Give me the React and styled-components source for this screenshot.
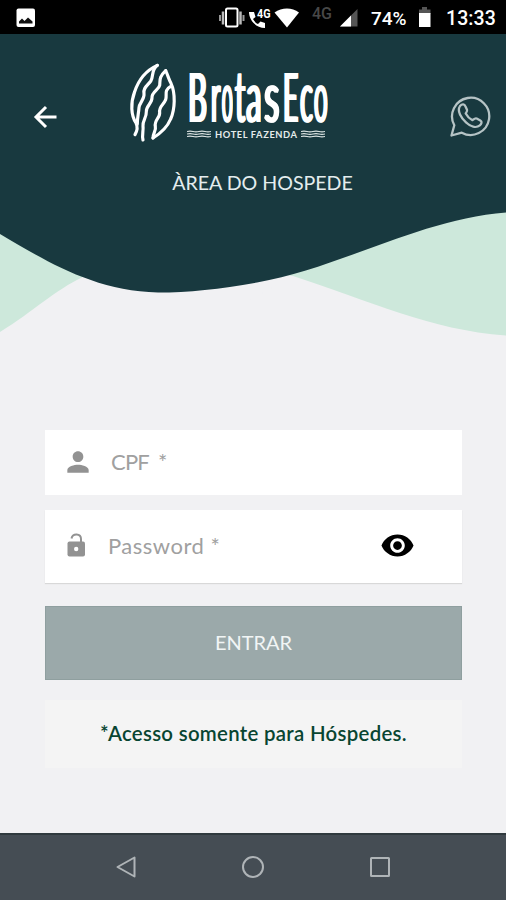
import * as React from 'react';
import styled, { createGlobalStyle } from "styled-components";
import { MdPerson, MdVisibility } from "react-icons/md";

// width of each letter and how far it is squeezed
const word = [
  { char: 'B', width: 22.5, scale: 0.43, bold: true },
  { char: 'r', width: 11.5, scale: 0.38 },
  { char: 'o', width: 12.5, scale: 0.29 },
  { char: 't', width: 11.5, scale: 0.42 },
  { char: 'a', width: 18, scale: 0.46 },
  { char: 's', width: 18.5, scale: 0.52 },
  { char: 'E', width: 17, scale: 0.39, bold: true },
  { char: 'c', width: 14.5, scale: 0.4 },
  { char: 'o', width: 15, scale: 0.36 },
];

function StatusBar() {
  return (
    <StyledStatus>
      <Glyph width="20" height="20" viewBox="0 0 20 20" $left={16}>
        <rect x="0.5" y="0.5" width="18.5" height="18.5" rx="2" fill="#fff" />
        <path d="M3 15.5v-2l3-3 2.5 2.5L12 9.500l4.500 4v2z" fill="#111" />
      </Glyph>
      <Glyph width="28" height="22" viewBox="0 0 28 22" $left={182}>
        <rect x="8" y="1.500" width="11.500" height="18" rx="1.500" fill="none" stroke="#fff" strokeWidth="2" />
        <path d="M5 4.500v13M22.500 4.500v13" stroke="#bbb" strokeWidth="2.500" />
        <path d="M2 8v6M25.500 8v6" stroke="#999" strokeWidth="2" />
      </Glyph>
      <Glyph width="24" height="22" viewBox="0 0 24 22" $left={2}>
        <path d="M1 5h5l1.500 5-2.500 2c1.200 2.300 2.700 3.800 5 5l2.500-2.500 4.500 1.500v5C8 21 1 13 1 5z" fill="#fff" />
        <text x="9" y="11" fill="#fff" fontFamily="Roboto, sans-serif" fontWeight="700" fontSize="13" textLength="13.500" lengthAdjust="spacingAndGlyphs">4G</text>
      </Glyph>
      <Glyph width="26" height="20" viewBox="0 0 26 20" $left={2}>
        <path d="M0.500 4.500C8-1 18-1 25 4.500L13 19.500z" fill="#fff" />
      </Glyph>
      <Network>4G</Network>
      <Glyph width="18" height="18" viewBox="0 0 18 18" $left={8}>
        <path d="M0 17.500L17.500 0v17.500z" fill="#555" />
        <path d="M0 17.500L11 6.500v11z" fill="#fff" />
      </Glyph>
      <Percent>74%</Percent>
      <Glyph width="14" height="21" viewBox="0 0 14 21" $left={10}>
        <path d="M1 2.500h3V0h5v2.500h3.500V7H1z" fill="#555" />
        <path d="M1 6h11.500v14H1z" fill="#fff" />
      </Glyph>
      <Clock>13:33</Clock>
    </StyledStatus>
  );
}

function Logo() {
  return (
    <StyledLogo>
      <svg width="56" height="90" viewBox="0 0 168 270" fill="none" stroke="#fff" strokeWidth="9.500" strokeLinecap="round" strokeLinejoin="round">
        <path d="M97 22C68 35 42 62 29 101C16 136 18 172 33 195Q41 211 30 230" />
        <path d="M97 22C77 38 87 54 77 70C66 84 54 90 57 107C59 124 43 134 42 149C41 166 37 177 37 198" />
        <path d="M122 38C101 58 106 65 104 82C101 96 80 101 81 119C82 136 63 143 64 161C65 179 52 188 54 204C56 218 50 230 54 246" />
        <path d="M122 38C128 50 131 63 138 76C152 106 150 154 137 183C127 207 110 224 84 240" />
        <path d="M136 86C116 97 127 111 122 125C116 140 101 146 104 163C106 179 87 187 91 205C94 218 84 224 84 240" />
      </svg>
      <Brand>
        <Wordmark>
          {word.map((letter, i) => (
            <Letter key={i} $width={letter.width} $scale={letter.scale} $bold={letter.bold}>
              <span>{letter.char}</span>
            </Letter>
          ))}
        </Wordmark>
        <Tagline>
          <WaterLines />
          <span>HOTEL FAZENDA</span>
          <WaterLines />
        </Tagline>
      </Brand>
    </StyledLogo>
  );
}

function WaterLines() {
  return (
    <svg width="24" height="8" viewBox="0 0 24 8" fill="none" stroke="#dfe7e6" strokeWidth="1.100">
      <path d="M0 1.500q3-.8 6 0t6 0 6 0 6 0M0 4q3-.8 6 0t6 0 6 0 6 0M0 6.500q3-.8 6 0t6 0 6 0 6 0" />
    </svg>
  );
}

function App() {
  return (
    <>
      <GlobalStyle />
      <Screen>
        <StatusBar />
        <Header>
          <TopRow>
            <IconButton aria-label="Voltar" $left={33}>
              <svg width="25" height="26" viewBox="0 0 25 26" fill="none" stroke="#fff" strokeWidth="3">
                <path d="M23.500 13H3.500M13 3L3 13l10 10" />
              </svg>
            </IconButton>
            <Logo />
            <IconButton aria-label="WhatsApp" $left={119}>
              <svg width="42" height="42" viewBox="0 0 42 42" fill="none" stroke="#b5c3c5" strokeWidth="2.300" strokeLinejoin="round">
                <path d="M2.500 39.500l2.800-10.300A18.600 18.600 0 1 1 12.800 36.700z" />
                <path d="M11 10c2.200-2.600 4.400-2 5.400.3l1.600 3.400c.6 1.700-.5 2.700-1.300 3.800 1.700 3.200 3.800 5.200 6.800 6.700 1.300-1 2.500-2.500 4.200-1.700l3.600 1.900c2.200 1.300 1.200 3.500-.5 5-3.700 3-9.200 1.200-13.800-3-4.700-4.300-9.300-11.300-6-16.400z" />
              </svg>
            </IconButton>
          </TopRow>
          <Title>ÀREA DO HOSPEDE</Title>
        </Header>
        <Waves width="506" height="136" viewBox="0 204 506 136">
          <path d="M0 204H506V335.500C430 330 370 301 293 276L83 277C55 290 34 311 0 332z" fill="#cde8db" />
          <path d="M83 278C130 267 240 268 293 276L250 300H130z" fill="#f1f1f3" />
          <path d="M0 204H506V212.500C420 219 340 268 257 282.500C221 289 188 292.500 158 292.500C92 291 43 259 0 234z" fill="#18393f" />
        </Waves>
        <Form>
          <Field $height={65}>
            <FieldIcon $left={17}><MdPerson size={32} /></FieldIcon>
            <Label $left={17} $spacing={-0.8}>CPF&nbsp; *</Label>
          </Field>
          <Field $height={73} $line>
            <FieldIcon $left={22}>
              <svg width="19" height="25" viewBox="0 0 19 25">
                <rect x="0.500" y="8.500" width="17.500" height="15" rx="2" fill="#929292" />
                <path d="M4.500 5.500C5.500 0 14 0 14 6V9" fill="none" stroke="#929292" strokeWidth="2" />
                <circle cx="9.200" cy="16" r="2.200" fill="#fff" />
              </svg>
            </FieldIcon>
            <Label $left={22} $spacing={0.5}>Password *</Label>
            <Eye><MdVisibility size={35} /></Eye>
          </Field>
          <Submit>ENTRAR</Submit>
          <Note>*Acesso somente para Hóspedes.</Note>
        </Form>
        <NavBar>
          <svg width="22" height="24" viewBox="0 0 22 24"><path d="M19.500 2.500v19L2.500 12z" /></svg>
          <svg width="24" height="24" viewBox="0 0 24 24"><circle cx="12" cy="12" r="10" /></svg>
          <svg width="22" height="24" viewBox="0 0 22 24"><rect x="2" y="3" width="18" height="18" rx="0.500" /></svg>
        </NavBar>
      </Screen>
    </>
  );
}
export default App;

const GlobalStyle = createGlobalStyle`
  * {
    box-sizing: border-box;
  }
  body {
    margin: 0;
    background: #f1f1f3;
    font-family: Lato, "Open Sans", sans-serif;
  }
  svg {
    display: block;
  }
`;

const Screen = styled.div`
  display: flex;
  flex-direction: column;
  width: 506px;
  height: 900px;
  overflow: hidden;
  background: #f1f1f3;
`;

const StyledStatus = styled.div`
  display: flex;
  align-items: center;
  height: 34px;
  flex: none;
  padding-top: 1px;
  background: #000;
  color: #fff;
  font-family: Roboto, sans-serif;
  font-weight: 500;
  white-space: nowrap;
`;

const Glyph = styled.svg`
  flex: none;
  margin-left: ${props => props.$left}px;
`;

const Network = styled.span`
  width: 20px;
  margin: 0 0 8px 12px;
  color: #484848;
  font-size: 16px;
`;

const Percent = styled.span`
  width: 37px;
  margin: 2px 0 0 13px;
  font-size: 19px;
`;

const Clock = styled.span`
  margin: 2px 0 0 14px;
  font-size: 19.5px;
  letter-spacing: 0.1px;
`;

const Header = styled.header`
  flex: none;
  height: 170px;
  background: #18393f;
`;

const TopRow = styled.div`
  display: flex;
  align-items: flex-start;
  height: 128px;
  padding-top: 24px;
`;

const IconButton = styled.button`
  display: flex;
  align-items: center;
  height: 42px;
  margin: 38px 0 0 ${props => props.$left}px;
  padding: 0;
  border: 0;
  background: none;
`;

const StyledLogo = styled.div`
  display: flex;
  width: 205px;
  margin-left: 67px;
`;

const Brand = styled.div`
  flex: none;
  margin: 4px 0 0 6px;
`;

const Wordmark = styled.div`
  display: flex;
  height: 66px;
  color: #fff;
  font-size: 67px;
  font-weight: 400;
  line-height: 69px;
`;

// the narrow hand lettered look comes from squeezing each letter
const Letter = styled.span`
  width: ${props => props.$width}px;
  span {
    display: inline-block;
    transform: scale(${props => props.$scale}, ${props => props.$bold ? 1 : 1.08});
    transform-origin: 0 60px;
    text-shadow: ${props => props.$bold ? '2px 0 #fff, 4px 0 #fff, 6px 0 #fff' : '2px 0 #fff, 4px 0 #fff, 5px 0 #fff'};
  }
`;

const Tagline = styled.div`
  display: flex;
  align-items: center;
  gap: 4px;
  height: 12px;
  color: #e5eceb;
  font-size: 9.3px;
  font-weight: 700;
  white-space: nowrap;
  span {
    width: 82px;
    letter-spacing: 0.6px;
  }
`;

const Title = styled.h1`
  margin: 0;
  padding-left: 19px;
  color: #e4edee;
  font-size: 19.6px;
  font-weight: 400;
  line-height: 42px;
  text-align: center;
`;

const Waves = styled.svg`
  flex: none;
`;

const Form = styled.div`
  display: flex;
  flex-direction: column;
  flex: none;
  height: 493px;
  padding: 90px 44px 0 45px;
`;

const Field = styled.div`
  display: flex;
  align-items: center;
  height: ${props => props.$height}px;
  margin-bottom: ${props => props.$line ? 23 : 15}px;
  padding-bottom: 2px;
  background: #fff;
  box-shadow: ${props => props.$line ? '0 1px 1px #d8d8d8' : 'none'};
`;

const FieldIcon = styled.span`
  margin-left: ${props => props.$left}px;
  color: #929292;
`;

const Label = styled.span`
  margin-left: ${props => props.$left}px;
  color: #a0a0a0;
  font-size: 22px;
  font-weight: 400;
  letter-spacing: ${props => props.$spacing}px;
`;

const Eye = styled.span`
  margin: 0 47px 0 auto;
  color: #000;
`;

const Submit = styled.button`
  height: 74px;
  padding: 0 0 2px;
  border: 1px solid #8f9f9f;
  background: #9ba9aa;
  color: #f1f5f5;
  font-family: inherit;
  font-size: 20px;
`;

const Note = styled.p`
  display: flex;
  align-items: center;
  justify-content: center;
  height: 68px;
  margin: 20px 0 0;
  padding-bottom: 3px;
  background: #f4f4f4;
  color: #084531;
  font-size: 20.4px;
  font-weight: 600;
  letter-spacing: 0.3px;
`;

const NavBar = styled.nav`
  display: flex;
  align-items: center;
  justify-content: center;
  gap: 104px;
  flex: 1;
  padding-bottom: 2px;
  border-top: 2px solid #303a3e;
  background: #454d54;
  svg {
    fill: none;
    stroke: #afb4b7;
    stroke-width: 2;
    stroke-linejoin: round;
  }
`;
